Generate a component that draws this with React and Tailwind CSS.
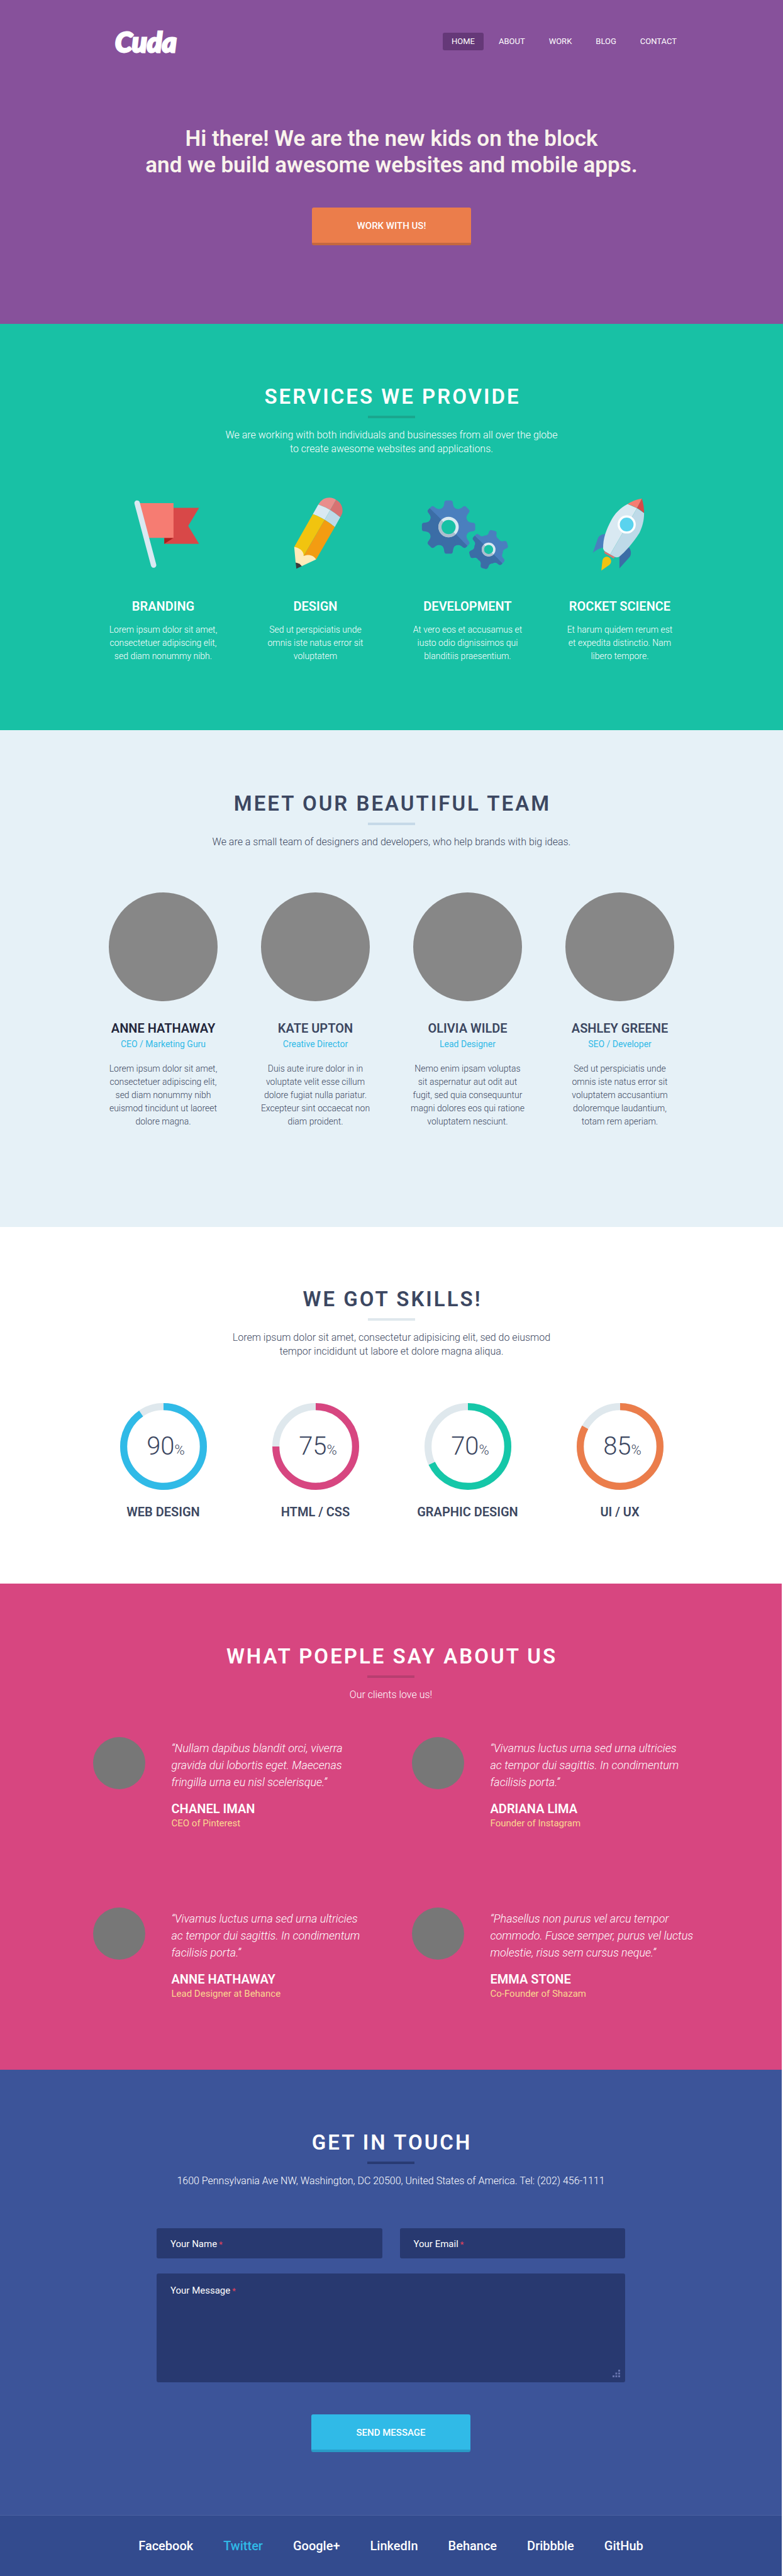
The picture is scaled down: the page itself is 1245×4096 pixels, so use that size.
import React from "react";

const NAV = ["HOME", "ABOUT", "WORK", "BLOG", "CONTACT"];

function FlagIcon() {
  return (
    <svg viewBox="-60 60 600 420" className="h-[121px] w-[173px]" aria-hidden="true">
      <path d="M246 131H438L378 231L438 330H246Z" fill="#d84848" />
      <path d="M246 297H297L246 330Z" fill="#a91e1e" />
      <path d="M105 105H297V297H150Z" fill="#f67c72" />
      <path d="M96 105L187 447" stroke="#d9e9f2" strokeWidth="30" strokeLinecap="round" />
    </svg>
  );
}

function PencilIcon() {
  return (
    <svg viewBox="780 60 600 420" className="h-[121px] w-[173px]" aria-hidden="true">
      <path d="M1096 113C1112 88 1130 75 1157 75C1172 75 1184 80 1194 87L1162 143Q1130 124 1096 113Z" fill="#e98e8c" />
      <path d="M1194 87C1216 98 1230 120 1230 148C1230 160 1225 170 1217 183Q1190 160 1162 143Z" fill="#d87272" />
      <path d="M1096 113Q1130 124 1162 143L1131 197Q1098 177 1066 166Z" fill="#d9e9f2" />
      <path d="M1162 143Q1190 160 1217 183L1187 237Q1160 214 1131 197Z" fill="#bedae8" />
      <path d="M1066 166Q1098 177 1131 197L1015 397L990 360L963 347Z" fill="#f1c40f" />
      <path d="M1131 197Q1160 214 1187 237L1084 416L1040 400L1015 397Z" fill="#f39c12" />
      <path d="M963 347C990 350 1018 370 1015 397C1040 385 1070 392 1084 416L1004 453L971 434Z" fill="#ffebba" />
      <path d="M971 433Q992 436 1005 453L975 467Z" fill="#3b3b3b" />
    </svg>
  );
}

const BIG_TOOTH =
  "M0 0L-42 -101Q-30 -106 -27 -116Q-24 -126 -23 -137Q-21 -147 -11 -147H11Q21 -147 23 -137Q24 -126 27 -116Q30 -106 42 -101Z";
const SMALL_TOOTH =
  "M0 0L-41 -69Q-26 -74 -23 -84L-21 -98Q-19 -108 -9 -108H9Q19 -108 21 -98L23 -84Q26 -74 41 -69Z";

function Gear({ id, cx, cy, body, tooth, count, start, ring, hole }) {
  const shape = (
    <>
      <circle r={body} />
      {Array.from({ length: count }, (_, i) => (
        <path key={i} d={tooth} transform={`rotate(${start + (i * 360) / count})`} />
      ))}
    </>
  );
  return (
    <g transform={`translate(${cx} ${cy})`}>
      <clipPath id={id}>
        <path d="M-200 -200L200 200H-200Z" />
      </clipPath>
      <g fill="#4a7fbe">{shape}</g>
      <g clipPath={`url(#${id})`} fill="#3b6da6">{shape}</g>
      <circle r={ring} fill="#d9e9f2" />
      <circle r={ring} fill="#abbfcf" clipPath={`url(#${id})`} />
      <circle r={hole} fill="#18c1a5" />
    </g>
  );
}

function GearsIcon() {
  return (
    <svg viewBox="30 60 600 420" className="h-[121px] w-[173px]" aria-hidden="true">
      <Gear id="gear-big" cx={225} cy={237} body={107} tooth={BIG_TOOTH} count={8} start={0} ring={56} hole={39} />
      <Gear id="gear-small" cx={446} cy={361} body={77} tooth={SMALL_TOOTH} count={6} start={14} ring={38} hole={25} />
    </svg>
  );
}

function RocketIcon() {
  return (
    <svg viewBox="870 60 600 420" className="h-[121px] w-[173px]" aria-hidden="true">
      <path d="M1092 276C1070 274 1054 286 1048 302L1021 380Q1050 354 1082 350Z" fill="#4a7fbe" />
      <path d="M1220 348C1234 366 1234 388 1225 402L1168 465V396Z" fill="#3b6da6" />
      <path d="M1084 369L1143 403L1136 411L1086 382Z" fill="#dc7470" />
      <path d="M1213 110C1170 132 1142 165 1125 195C1095 250 1077 300 1078 356Q1080 367 1090 372L1117 388L1265 133Z" fill="#d9e9f2" />
      <path d="M1117 388L1142 402Q1155 408 1168 400C1200 372 1240 330 1278 270C1296 232 1304 200 1304 160L1265 133Z" fill="#bedae8" />
      <path d="M1213 110Q1250 86 1292 80L1265 133Q1240 118 1213 110Z" fill="#f67c72" />
      <path d="M1292 80Q1304 118 1304 160Q1285 142 1265 133Z" fill="#d84848" />
      <circle cx="1208" cy="223" r="44" fill="#5ad3ee" stroke="#fff" strokeWidth="12" />
      <path d="M1068 477L1074 424C1078 394 1112 394 1121 418C1124 432 1119 439 1112 446Z" fill="#f1c40f" />
    </svg>
  );
}

const SERVICES = [
  { Icon: FlagIcon, title: "BRANDING", lines: ["Lorem ipsum dolor sit amet,", "consectetuer adipiscing elit,", "sed diam nonummy nibh."] },
  { Icon: PencilIcon, title: "DESIGN", lines: ["Sed ut perspiciatis unde", "omnis iste natus error sit", "voluptatem"] },
  { Icon: GearsIcon, title: "DEVELOPMENT", lines: ["At vero eos et accusamus et", "iusto odio dignissimos qui", "blanditiis praesentium."] },
  { Icon: RocketIcon, title: "ROCKET SCIENCE", lines: ["Et harum quidem rerum est", "et expedita distinctio. Nam", "libero tempore."] },
];

const TEAM = [
  { name: "ANNE HATHAWAY", tone: "text-[#23263b]", role: "CEO / Marketing Guru", lines: ["Lorem ipsum dolor sit amet,", "consectetuer adipiscing elit,", "sed diam nonummy nibh", "euismod tincidunt ut laoreet", "dolore magna."] },
  { name: "KATE UPTON", tone: "text-[#3c4761]", role: "Creative Director", lines: ["Duis aute irure dolor in in", "voluptate velit esse cillum", "dolore fugiat nulla pariatur.", "Excepteur sint occaecat non", "diam proident."] },
  { name: "OLIVIA WILDE", tone: "text-[#3c4761]", role: "Lead Designer", lines: ["Nemo enim ipsam voluptas", "sit aspernatur aut odit aut", "fugit, sed quia consequuntur", "magni dolores eos qui ratione", "voluptatem nesciunt."] },
  { name: "ASHLEY GREENE", tone: "text-[#3c4761]", role: "SEO / Developer", lines: ["Sed ut perspiciatis unde", "omnis iste natus error sit", "voluptatem accusantium", "doloremque laudantium,", "totam rem aperiam."] },
];

const SKILLS = [
  { label: "WEB DESIGN", value: 90, arc: 90.5, color: "#30bae7" },
  { label: "HTML / CSS", value: 75, arc: 75, color: "#d74680" },
  { label: "GRAPHIC DESIGN", value: 70, arc: 68, color: "#15c7a8" },
  { label: "UI / UX", value: 85, arc: 83, color: "#eb7d4b" },
];

const QUOTES = [
  { lines: ["“Nullam dapibus blandit orci, viverra", "gravida dui lobortis eget. Maecenas", "fringilla urna eu nisl scelerisque.”"], name: "CHANEL IMAN", role: "CEO of Pinterest" },
  { lines: ["“Vivamus luctus urna sed urna ultricies", "ac tempor dui sagittis. In condimentum", "facilisis porta.”"], name: "ADRIANA LIMA", role: "Founder of Instagram" },
  { lines: ["“Vivamus luctus urna sed urna ultricies", "ac tempor dui sagittis. In condimentum", "facilisis porta.”"], name: "ANNE HATHAWAY", role: "Lead Designer at Behance" },
  { lines: ["“Phasellus non purus vel arcu tempor", "commodo. Fusce semper, purus vel luctus", "molestie, risus sem cursus neque.”"], name: "EMMA STONE", role: "Co-Founder of Shazam" },
];

const SOCIAL = ["Facebook", "Twitter", "Google+", "LinkedIn", "Behance", "Dribbble", "GitHub"];

function Lines({ lines }) {
  return lines.map((line) => (
    <span key={line} className="block whitespace-nowrap">
      {line}
    </span>
  ));
}

function SectionHeader({ title, rule, lines }) {
  return (
    <header className="flex flex-col items-center text-center">
      <h2 className="pl-[3px] text-[33px] leading-[42px] font-semibold tracking-[3px]">{title}</h2>
      <span className={`mt-[9px] h-1 w-[75px] ${rule}`} />
      <p className="mt-4 text-[16px] leading-[22px] font-light">
        <Lines lines={lines} />
      </p>
    </header>
  );
}

function Ring({ value, arc, color }) {
  return (
    <div className="relative flex size-[138px] items-center justify-center">
      <svg viewBox="0 0 160 160" className="absolute inset-0 size-full -rotate-90" aria-hidden="true">
        <circle cx="80" cy="80" r="73.5" fill="none" stroke="#dfe8ed" strokeWidth="13" />
        <circle cx="80" cy="80" r="73.5" fill="none" stroke={color} strokeWidth="13" pathLength="100" strokeDasharray={`${arc} 100`} />
      </svg>
      <p className="flex items-baseline pl-2 font-light">
        <span className="text-[40px] leading-[48px]">{value}</span>
        <span className="text-[22px] leading-6">%</span>
      </p>
    </div>
  );
}

function Field({ id, label, multiline }) {
  const box = "block w-full rounded-[3px] bg-[#283970] px-[22px] text-[15px] text-white outline-none";
  return (
    <div className="relative">
      {multiline ? (
        <textarea id={id} required className={`${box} h-[173px] resize-none py-4`} />
      ) : (
        <input id={id} type="text" required className={`${box} h-12`} />
      )}
      <label htmlFor={id} className={`absolute left-[22px] text-[15px] leading-5 ${multiline ? "top-[17px]" : "top-[15px]"}`}>
        {label}
        <span className="ml-[3px] text-[13px] text-[#e8435a]">*</span>
      </label>
      {multiline && (
        <svg viewBox="0 0 12 12" className="pointer-events-none absolute right-2 bottom-2 size-3 fill-[#6673ad]" aria-hidden="true">
          <path d="M9 0h3v3h-3zM9 4.500h3v3h-3zM4.500 4.500h3v3h-3zM9 9h3v3h-3zM4.500 9h3v3h-3zM0 9h3v3h-3z" />
        </svg>
      )}
    </div>
  );
}

export default function App() {
  return (
    <div className="bg-white font-[Roboto,sans-serif] text-white">
      <section className="bg-[#87519b] px-6 pt-[46px] pb-[125px]">
        <header className="mx-auto flex h-10 max-w-[935px] items-center justify-between pl-7">
          <a href="#home" className="font-[Lato,sans-serif] text-[44px] leading-10 font-black italic [-webkit-text-stroke:3px_white]">
            Cuda
          </a>
          <nav className="flex gap-[10px]">
            {NAV.map((item, i) => (
              <a
                key={item}
                href={`#${item.toLowerCase()}`}
                className={`rounded-[3px] px-[14px] text-[13px] leading-7 ${i === 0 ? "bg-[#653878]" : ""}`}
              >
                {item}
              </a>
            ))}
          </nav>
        </header>
        <div className="mt-[114px] flex flex-col items-center text-center">
          <h1 className="text-[35px] leading-[42px] font-semibold text-[#f9f3ec]">
            Hi there! We are the new kids on the block
            <br />
            and we build awesome websites and mobile apps.
          </h1>
          <button type="button" className="mt-[46px] h-[60px] w-[253px] rounded-[3px] border-b-4 border-[#c4683f] bg-[#eb7d4b] pt-[3px] text-[15px] font-medium">
            WORK WITH US!
          </button>
        </div>
      </section>

      <section className="bg-[#18c1a5] pt-[95px] pb-[107px]">
        <SectionHeader
          title="SERVICES WE PROVIDE"
          rule="bg-[#1aa68e]"
          lines={["We are working with both individuals and businesses from all over the globe", "to create awesome websites and applications."]}
        />
        <div className="mx-auto mt-[62px] grid max-w-[968px] grid-cols-4">
          {SERVICES.map(({ Icon, title, lines }) => (
            <article key={title} className="flex flex-col items-center text-center">
              <Icon />
              <h3 className="mt-11 text-[20px] leading-6 font-semibold">{title}</h3>
              <p className="mt-[15px] text-[14px] leading-[21px] font-light">
                <Lines lines={lines} />
              </p>
            </article>
          ))}
        </div>
      </section>

      <section className="bg-[#e6f1f7] pt-24 pb-[157px] text-[#3c4761]">
        <SectionHeader
          title="MEET OUR BEAUTIFUL TEAM"
          rule="bg-[#c6d9e8]"
          lines={["We are a small team of designers and developers, who help brands with big ideas."]}
        />
        <div className="mx-auto mt-[69px] grid max-w-[968px] grid-cols-4">
          {TEAM.map(({ name, tone, role, lines }) => (
            <article key={name} className="flex flex-col items-center text-center">
              <div className="size-[173px] rounded-full bg-[#878787]" />
              <h3 className={`mt-[31px] text-[20px] leading-6 font-semibold ${tone}`}>{name}</h3>
              <p className="mt-1 text-[14px] leading-[18px] text-[#30bae7]">{role}</p>
              <p className="mt-5 text-[14px] leading-[21px] font-light">
                <Lines lines={lines} />
              </p>
            </article>
          ))}
        </div>
      </section>

      <section className="bg-white pt-[94px] pb-[102px] text-[#3c4761]">
        <SectionHeader
          title="WE GOT SKILLS!"
          rule="bg-[#dfe8ed]"
          lines={["Lorem ipsum dolor sit amet, consectetur adipisicing elit, sed do eiusmod", "tempor incididunt ut labore et dolore magna aliqua."]}
        />
        <div className="mx-auto mt-[71px] grid max-w-[968px] grid-cols-4">
          {SKILLS.map((skill) => (
            <article key={skill.label} className="flex flex-col items-center">
              <Ring value={skill.value} arc={skill.arc} color={skill.color} />
              <h3 className="mt-[23px] text-[20px] leading-6 font-semibold">{skill.label}</h3>
            </article>
          ))}
        </div>
      </section>

      <div className="pr-0.5">
        <section className="bg-[#d74680] pt-[95px] pb-28">
          <SectionHeader title="WHAT POEPLE SAY ABOUT US" rule="bg-[#b73e70]" lines={["Our clients love us!"]} />
          <div className="mx-auto mt-14 grid max-w-[1080px] grid-cols-2 gap-y-[125px] pl-[66px]">
            {QUOTES.map(({ lines, name, role }) => (
              <figure key={name} className="flex gap-[42px]">
                <div className="size-[83px] shrink-0 rounded-full bg-[#777]" />
                <div className="pt-1">
                  <blockquote className="text-[18px] leading-[27px] font-light italic">
                    <Lines lines={lines} />
                  </blockquote>
                  <figcaption className="mt-[17px]">
                    <span className="block text-[20px] leading-6 font-semibold">{name}</span>
                    <span className="mt-0.5 block text-[15px] leading-[18px] text-[#fbd78f]">{role}</span>
                  </figcaption>
                </div>
              </figure>
            ))}
          </div>
        </section>

        <section className="bg-[#3c5499] pt-[95px] pb-[100px]">
          <SectionHeader
            title="GET IN TOUCH"
            rule="bg-[#293b73]"
            lines={["1600 Pennsylvania Ave NW, Washington, DC 20500, United States of America. Tel: (202) 456-1111"]}
          />
          <form className="mx-auto mt-16 flex max-w-[745px] flex-col items-center" onSubmit={(e) => e.preventDefault()}>
            <div className="grid w-full grid-cols-2 gap-x-7 gap-y-6">
              <Field id="name" label="Your Name" />
              <Field id="email" label="Your Email" />
              <div className="col-span-2">
                <Field id="message" label="Your Message" multiline />
              </div>
            </div>
            <button type="submit" className="mt-[51px] h-[60px] w-[253px] rounded-[3px] border-b-4 border-[#289bc6] bg-[#30bae7] pt-[3px] text-[15px] font-medium">
              SEND MESSAGE
            </button>
          </form>
        </section>

        <footer className="border-t border-[#4a60a2] bg-[#334b8e] py-9">
          <nav className="flex justify-center gap-12">
            {SOCIAL.map((name) => (
              <a key={name} href={`#${name.toLowerCase()}`} className={`text-[20px] leading-6 font-medium ${name === "Twitter" ? "text-[#30bae7]" : ""}`}>
                {name}
              </a>
            ))}
          </nav>
        </footer>
      </div>
    </div>
  );
}
